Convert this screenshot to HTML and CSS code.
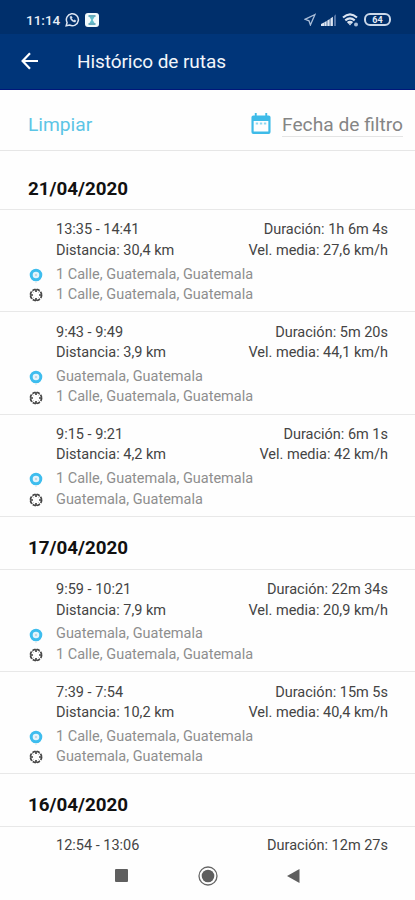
FILE: index.html
```html
<!DOCTYPE html>
<html lang="es">
<head>
    <meta charset="UTF-8">
    <meta name="viewport" content="width=device-width, initial-scale=1.0">
    <title>Histórico de rutas</title>
    <link rel="stylesheet" href="styles.css">
</head>
<body>
    <!-- Shared marker icons -->
    <svg class="defs" width="0" height="0">
        <symbol id="start" viewBox="0 0 16 16">
            <circle cx="8" cy="8" r="4.8" fill="#e4f4fc" stroke="#3ebdee" stroke-width="3"/>
            <circle cx="8" cy="8" r="1.2" fill="#c3d5df"/>
            <path d="M8 14.500v1.500" stroke="#ddd" stroke-width="1"/>
        </symbol>
        <symbol id="end" viewBox="0 0 16 16">
            <circle cx="8" cy="8" r="5.600" fill="none" stroke="#444" stroke-width="1.7" stroke-dasharray="3.200 1.200"/>
            <path d="M8 2v3M8 11v3M2 8h3M11 8h3" stroke="#444" stroke-width="1.7"/>
            <path d="M4.200 4.200l1.200 1.200M10.600 10.600l1.200 1.200M11.800 4.200l-1.200 1.200M5.400 10.600l-1.200 1.200" stroke="#888" stroke-width="1"/>
        </symbol>
    </svg>

    <div class="status-bar">
        <span class="clock">11:14</span>
        <svg class="whatsapp" width="15" height="15" viewBox="0 0 15 15" fill="none" stroke="#dce5f2">
            <path d="M1.2 13.8l.9-3.3A6 6 0 1 1 4.6 13z" stroke-width="1.5"/>
            <path d="M5.2 4.4c-.8 2.4 2.6 6 5.2 5.6l.4-1.4-1.5-.7-.8.7L6.6 6.7l.6-.9-.7-1.5z" fill="#dce5f2" stroke-width=".5"/>
        </svg>
        <svg class="app" width="14" height="14" viewBox="0 0 14 14">
            <rect width="14" height="14" rx="3" fill="#f1f9fb"/>
            <path d="M3.5 3h7M3.5 11h7" stroke="#3b92aa" stroke-width="1.6"/>
            <path d="M4.5 4h5L7.7 7l1.8 3h-5l1.8-3z" fill="#62bdca"/>
        </svg>
        <div class="status-icons">
            <svg width="12" height="13" viewBox="0 0 12 13" fill="none" stroke="#a9bdd8" stroke-width="1.3">
                <path d="M11 1.5L1 6.3l4 1.500L6.400 12z"/>
            </svg>
            <svg width="16" height="12" viewBox="0 0 16 12" fill="#dce5f2">
                <path d="M0 12V10l3-1.500v3.500zM3.300 12V8.300l2.400-1.200V12zM6.300 12V6.500l2.400-1.500v7zM9.400 12V4.500l2.500-1.800V12z"/>
                <path d="M13 12V2l2-1.700V12z" fill="#5474a5"/>
            </svg>
            <svg width="17" height="14" viewBox="0 0 17 14" fill="none" stroke="#dce5f2" stroke-width="2.1">
                <path d="M1 4.600q7-6.400 14 0M3.300 7.400q4.700-4.200 9.400 0M5.600 9.900q2.400-2 4.800 0"/>
                <path d="M6.200 10.200h3.600L8 12.400z" fill="#dce5f2" stroke="none"/>
                <circle cx="14" cy="11.500" r="2" fill="#a9bdd8" stroke="none"/>
            </svg>
            <span class="battery">64</span>
        </div>
    </div>

    <div class="app-bar">
        <svg width="18" height="18" viewBox="0 0 18 18" fill="none" stroke="#fff" stroke-width="2.2">
            <path d="M17 9H2M9 1.2L1.600 9l7.400 7.800"/>
        </svg>
        <h1>Histórico de rutas</h1>
    </div>

    <div class="filter-bar">
        <span class="clear">Limpiar</span>
        <svg width="20" height="21" viewBox="0 0 20 22">
            <path d="M2 2.500h16a2 2 0 0 1 2 2V20a2 2 0 0 1-2 2H2a2 2 0 0 1-2-2V4.500a2 2 0 0 1 2-2zM2.300 8.500V19.500h15.400V8.500z" fill="#3ebbe8" fill-rule="evenodd"/>
            <path d="M4.500 0v4M15.500 0v4" stroke="#3ebbe8" stroke-width="2"/>
            <path d="M4.500 11h2.500M8.800 11h2.500M13 11h2.500" stroke="#8dd7f1" stroke-width="2"/>
        </svg>
        <span class="date-filter">Fecha de filtro</span>
    </div>

    <div class="routes">
        <h2 class="first">21/04/2020</h2>
        <div class="route">
            <div class="row"><span>13:35 - 14:41</span><span>Duración: 1h 6m 4s</span></div>
            <div class="row"><span>Distancia: 30,4 km</span><span>Vel. media: 27,6 km/h</span></div>
            <div class="place from"><svg><use href="#start"/></svg>1 Calle, Guatemala, Guatemala</div>
            <div class="place"><svg><use href="#end"/></svg>1 Calle, Guatemala, Guatemala</div>
        </div>
        <div class="route">
            <div class="row"><span>9:43 - 9:49</span><span>Duración: 5m 20s</span></div>
            <div class="row"><span>Distancia: 3,9 km</span><span>Vel. media: 44,1 km/h</span></div>
            <div class="place from"><svg><use href="#start"/></svg>Guatemala, Guatemala</div>
            <div class="place"><svg><use href="#end"/></svg>1 Calle, Guatemala, Guatemala</div>
        </div>
        <div class="route">
            <div class="row"><span>9:15 - 9:21</span><span>Duración: 6m 1s</span></div>
            <div class="row"><span>Distancia: 4,2 km</span><span>Vel. media: 42 km/h</span></div>
            <div class="place from"><svg><use href="#start"/></svg>1 Calle, Guatemala, Guatemala</div>
            <div class="place"><svg><use href="#end"/></svg>Guatemala, Guatemala</div>
        </div>

        <h2>17/04/2020</h2>
        <div class="route">
            <div class="row"><span>9:59 - 10:21</span><span>Duración: 22m 34s</span></div>
            <div class="row"><span>Distancia: 7,9 km</span><span>Vel. media: 20,9 km/h</span></div>
            <div class="place from"><svg><use href="#start"/></svg>Guatemala, Guatemala</div>
            <div class="place"><svg><use href="#end"/></svg>1 Calle, Guatemala, Guatemala</div>
        </div>
        <div class="route">
            <div class="row"><span>7:39 - 7:54</span><span>Duración: 15m 5s</span></div>
            <div class="row"><span>Distancia: 10,2 km</span><span>Vel. media: 40,4 km/h</span></div>
            <div class="place from"><svg><use href="#start"/></svg>1 Calle, Guatemala, Guatemala</div>
            <div class="place"><svg><use href="#end"/></svg>Guatemala, Guatemala</div>
        </div>

        <h2>16/04/2020</h2>
        <div class="route last">
            <div class="row"><span>12:54 - 13:06</span><span>Duración: 12m 27s</span></div>
        </div>
    </div>

    <div class="nav-bar">
        <svg width="13" height="13" viewBox="0 0 13 13"><rect width="13" height="13" rx="1" fill="#5f5f5f"/></svg>
        <svg width="20" height="20" viewBox="0 0 20 20">
            <circle cx="10" cy="10" r="9" fill="none" stroke="#666" stroke-width="1.3"/>
            <circle cx="10" cy="10" r="6.300" fill="#5f5f5f"/>
        </svg>
        <svg width="13" height="14" viewBox="0 0 13 14"><path d="M0 7L12.500 0v14z" fill="#5f5f5f"/></svg>
    </div>
</body>
</html>
```
FILE: styles.css
```css
* {
    box-sizing: border-box;
}
body {
    display: flex;
    flex-direction: column;
    height: 900px;
    margin: 0;
    overflow: hidden;
    background-color: #fefefe;
    font-family: Roboto, "Liberation Sans", sans-serif;
}
svg {
    display: block;
    flex: none;
}
.defs {
    position: absolute;
}

/* top bars */
.status-bar {
    display: flex;
    align-items: center;
    height: 34px;
    padding: 5px 24px 0 26px;
    background-color: #002f6b;
    color: #e6edf6;
}
.clock {
    width: 34px;
    font-size: 13.5px;
    font-weight: 500;
}
.whatsapp {
    margin: 0 5px;
}
.status-icons {
    display: flex;
    align-items: center;
    gap: 5px;
    margin-left: auto;
}
.battery {
    width: 27px;
    height: 13px;
    border: 2px solid #cbd8e9;
    border-radius: 6px;
    font-size: 9px;
    font-weight: 700;
    line-height: 10px;
    text-align: center;
}
.app-bar {
    display: flex;
    align-items: center;
    height: 56px;
    padding: 0 21px 1px;
    background-color: #003579;
    border-bottom: 1px solid #00177b;
}
.app-bar h1 {
    margin: 0 0 0 38px;
    color: #f2f6fb;
    font-size: 19px;
    font-weight: 400;
    letter-spacing: -0.07px;
}
.filter-bar {
    display: flex;
    align-items: center;
    height: 61px;
    padding: 9px 12px 0 28px;
    border-bottom: 1px solid #e6e6e6;
    font-size: 19.2px;
}
.clear {
    margin-right: auto;
    color: #5cc5e6;
}
.filter-bar svg {
    margin-bottom: 2px;
}
.date-filter {
    margin-left: 11px;
    border-bottom: 1px solid #e4e4e4;
    color: #858585;
}

/* route list */
.routes {
    height: 700px;
}
.routes h2 {
    height: 53px;
    margin: 0;
    padding-left: 28px;
    border-bottom: 1px solid #e8e8e8;
    color: #111;
    font-size: 18.8px;
    font-weight: 700;
    line-height: 62px;
}
.routes h2.first {
    height: 59px;
    line-height: 76px;
}
.route {
    height: 102.3px;
    padding: 10.4px 27px 0 56px;
    border-bottom: 1px solid #e8e8e8;
    font-size: 14.5px;
    line-height: 20.3px;
}
.route.last {
    height: auto;
    padding-top: 9px;
    border-bottom: none;
}
.row {
    display: flex;
    justify-content: space-between;
    color: #444;
}
.place {
    display: flex;
    align-items: center;
    height: 20.5px;
    color: #8e8e8e;
}
.place.from {
    margin-top: 3.5px;
}
.place svg {
    width: 16px;
    height: 16px;
    margin: 0 12px 0 -28px;
}

.nav-bar {
    display: flex;
    align-items: center;
    justify-content: space-between;
    height: 49px;
    padding: 0 115px;
}
```
